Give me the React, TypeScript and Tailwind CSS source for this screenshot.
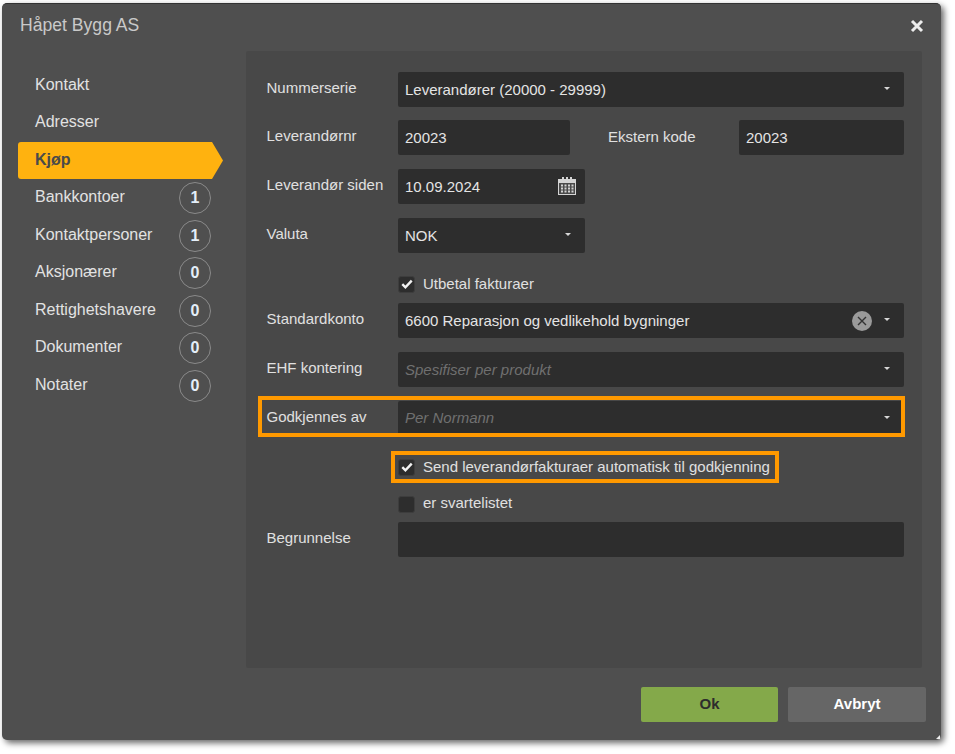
import React from "react";

const nav: [string, number | null][] = [
  ["Kontakt", null],
  ["Adresser", null],
  ["Kjøp", null],
  ["Bankkontoer", 1],
  ["Kontaktpersoner", 1],
  ["Aksjonærer", 0],
  ["Rettighetshavere", 0],
  ["Dokumenter", 0],
  ["Notater", 0],
];

function Caret() {
  return (
    <svg width="6" height="3" viewBox="0 0 6 3" className="shrink-0 -translate-y-[1px]">
      <path d="M0 0H6L3 3Z" fill="#d8d8d8" />
    </svg>
  );
}

function CheckBox({ checked }: { checked?: boolean }) {
  return (
    <span className="flex h-[17px] w-[17px] shrink-0 items-center justify-center rounded-[3px] border border-[#3d3d3d] bg-[#2d2d2d]">
      {checked && (
        <svg width="12" height="10" viewBox="0 0 12 10">
          <path d="M1.3 5.2L4.4 8.3L10.7 1.6" fill="none" stroke="#f2f2f2" strokeWidth="2.4" />
        </svg>
      )}
    </span>
  );
}

function Calendar() {
  return (
    <svg width="20" height="20" viewBox="0 0 20 20">
      <rect x="1" y="3" width="18" height="16" fill="#d4d4d4" />
      <rect x="2" y="7" width="16" height="11" fill="#4a4a4a" />
      <rect x="5" y="1" width="2" height="4" fill="#d4d4d4" />
      <rect x="9" y="1" width="2" height="4" fill="#d4d4d4" />
      <rect x="13" y="1" width="2" height="4" fill="#d4d4d4" />
      {[8.5, 11.5, 14.5].map((y) =>
        [4, 7.5, 11, 14.5].map((x) => <rect key={`${x}-${y}`} x={x} y={y} width="2" height="2" fill="#d4d4d4" />)
      )}
    </svg>
  );
}

function Field({
  children,
  width,
  select,
  placeholder,
  extra,
  textClass = "translate-y-[1px]",
}: {
  children?: React.ReactNode;
  width: string;
  select?: boolean;
  placeholder?: boolean;
  extra?: React.ReactNode;
  textClass?: string;
}) {
  return (
    <div className={`flex h-[35px] shrink-0 items-center rounded-[2px] bg-[#2d2d2d] pl-[7px] pr-[14px] ${width}`}>
      <span className={`flex-1 ${textClass} ${placeholder ? "italic text-[#707070]" : "text-[#e4e4e4]"}`}>{children}</span>
      {extra}
      {select && <Caret />}
    </div>
  );
}

function Row({ label, children, className = "" }: { label?: string; children: React.ReactNode; className?: string }) {
  return (
    <div className={`relative flex items-center ${className}`}>
      <div className="w-[132px] shrink-0 -translate-y-[1px] whitespace-nowrap pl-[0.5px] text-[#e0e0e0]">{label}</div>
      {children}
    </div>
  );
}

export default function App() {
  return (
    <div className="h-[754px] w-[955px] bg-white pl-[2px] pt-[3px] text-[15px] font-['Liberation_Sans',Arial,sans-serif]">
      <div className="relative flex h-[737px] w-[939px] flex-col rounded-[5px] border-t border-[#333] bg-[#4f4f4f] shadow-[3px_3px_6px_rgba(0,0,0,0.6)]">
        <div className="flex h-[47px] shrink-0 items-center justify-between pl-[18px] pr-[17px]">
          <span className="-translate-y-[2px] text-[17.6px] text-[#c9c9c9]">Håpet Bygg AS</span>
          <svg width="14" height="14" viewBox="0 0 14 14" className="-translate-y-[2px]">
            <path d="M2 2L12 12M12 2L2 12" stroke="#eeeeee" strokeWidth="3" />
          </svg>
        </div>
        <div className="flex min-h-0 flex-1">
          <div className="w-[244px] shrink-0 pl-[16px] pt-[16px]">
            {nav.map(([name, count]) =>
              name === "Kjøp" ? (
                <div key={name} className="flex h-[37.5px] items-center">
                  <div className="flex h-[37px] w-[194px] items-center rounded-l-[3px] bg-[#ffb20f] pl-[17px] text-[16px] font-bold text-[#4a4a4a]">
                    <span className="-translate-y-[1px]">{name}</span>
                  </div>
                  <svg width="11" height="37" viewBox="0 0 11 37" className="shrink-0">
                    <path d="M0 0L11 18.5L0 37Z" fill="#ffb20f" />
                  </svg>
                </div>
              ) : (
                <div key={name} className="flex h-[37.5px] w-[193px] items-center justify-between pl-[17px] text-[16px] text-[#e2e2e2]">
                  <span className="-translate-y-[1px]">{name}</span>
                  {count !== null && (
                    <span className="flex h-[32px] w-[32px] items-center justify-center rounded-full border border-[#8a8a8a] text-[16px] font-bold text-[#e4eef8]">
                      {count}
                    </span>
                  )}
                </div>
              )
            )}
          </div>
          <div className="flex flex-col">
            <div className="h-[617px] w-[676px] rounded-[2px] bg-[#484848] pl-[20px] pt-[21px]">
              <div className="flex w-[638px] flex-col">
                <Row label="Nummerserie">
                  <Field width="w-[506px]" select>
                    Leverandører (20000 - 29999)
                  </Field>
                </Row>
                <Row label="Leverandørnr" className="mt-[13px]">
                  <Field width="w-[172px]">20023</Field>
                  <div className="w-[169px] shrink-0 pl-[38px] text-[#e0e0e0]">Ekstern kode</div>
                  <Field width="w-[165px]">20023</Field>
                </Row>
                <Row label="Leverandør siden" className="mt-[14px]">
                  <Field width="w-[187px]" extra={<span className="-mr-[8px] flex -translate-x-[2px] -translate-y-[1px]"><Calendar /></span>}>
                    10.09.2024
                  </Field>
                </Row>
                <Row label="Valuta" className="mt-[14px]">
                  <Field width="w-[187px]" select>
                    NOK
                  </Field>
                </Row>
                <Row className="mt-[21px] h-[20px]">
                  <div className="flex items-center gap-[8px]">
                    <CheckBox checked />
                    <span className="text-[#e0e0e0]">Utbetal fakturaer</span>
                  </div>
                </Row>
                <Row label="Standardkonto" className="mt-[9px]">
                  <Field
                    width="w-[506px]"
                    select
                    extra={
                      <span className="mr-[12px] flex h-[20px] w-[20px] items-center justify-center rounded-full bg-[#9a9a9a]">
                        <svg width="10" height="10" viewBox="0 0 10 10">
                          <path d="M1 1L9 9M9 1L1 9" stroke="#333" strokeWidth="1.4" />
                        </svg>
                      </span>
                    }
                  >
                    6600 Reparasjon og vedlikehold bygninger
                  </Field>
                </Row>
                <Row label="EHF kontering" className="mt-[14px]">
                  <Field width="w-[506px]" select placeholder>
                    Spesifiser per produkt
                  </Field>
                </Row>
                <Row label="Godkjennes av" className="mt-[14px]">
                  <Field width="w-[506px]" select placeholder textClass="translate-y-0">
                    Per Normann
                  </Field>
                  <div className="pointer-events-none absolute -left-[8px] -right-[1px] -top-[5px] bottom-[-1px] border-[4px] border-[#ff9900]" />
                </Row>
                <Row className="mt-[21px] h-[20px]">
                  <div className="flex items-center gap-[8px]">
                    <CheckBox checked />
                    <span className="whitespace-nowrap text-[#e0e0e0]">Send leverandørfakturaer automatisk til godkjenning</span>
                  </div>
                  <div className="pointer-events-none absolute -top-[6px] -bottom-[6px] left-[125px] w-[388px] border-[4px] border-[#ff9900]" />
                </Row>
                <Row className="mt-[17px] h-[20px]">
                  <div className="flex items-center gap-[8px]">
                    <CheckBox />
                    <span className="-translate-y-[1px] text-[#e0e0e0]">er svartelistet</span>
                  </div>
                </Row>
                <Row label="Begrunnelse" className="mt-[8px]">
                  <Field width="w-[506px]" />
                </Row>
              </div>
            </div>
            <div className="mt-[19px] flex w-[680px] justify-end gap-[10px]">
              <button className="h-[35px] w-[137px] rounded-[2px] bg-[#84a94a] text-[15px] font-bold text-[#2d2d2d]">Ok</button>
              <button className="h-[35px] w-[138px] rounded-[2px] bg-[#666666] text-[15px] font-bold text-white">Avbryt</button>
            </div>
          </div>
        </div>
        <svg width="4" height="4" viewBox="0 0 4 4" className="absolute bottom-[1px] right-[1px]">
          <path d="M4 0V4H0Z" fill="#eeeeee" />
        </svg>
      </div>
    </div>
  );
}
